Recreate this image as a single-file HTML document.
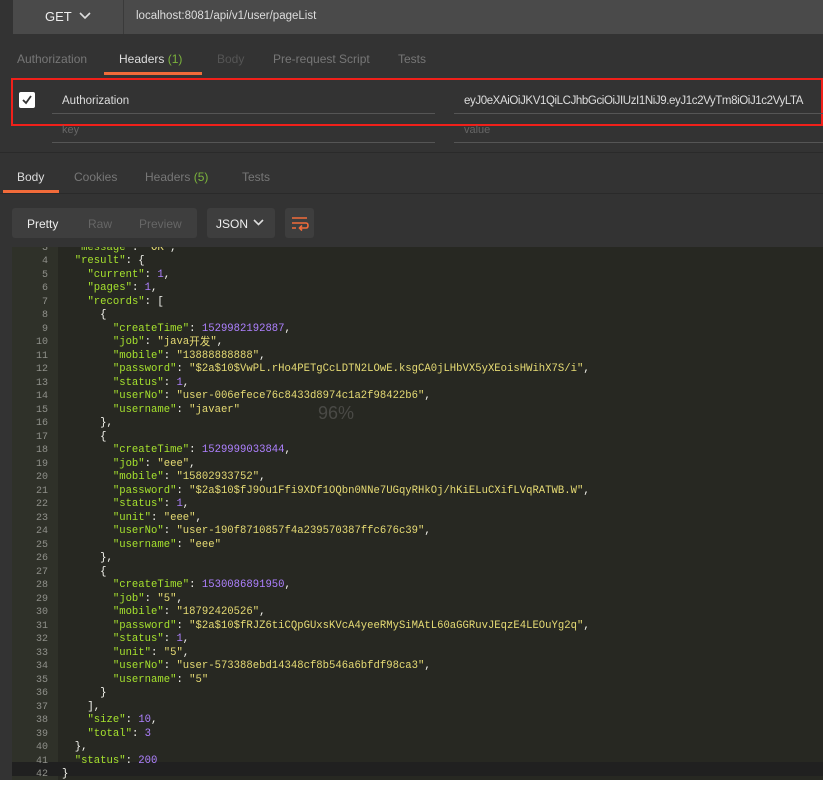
<!DOCTYPE html>
<html><head><meta charset="utf-8"><style>
*{margin:0;padding:0;box-sizing:border-box}
body{width:823px;height:788px;background:#fff;position:relative;overflow:hidden;font-family:"Liberation Sans","Noto Sans CJK SC",sans-serif}
.a{position:absolute}
#top{left:0;top:0;width:823px;height:780px;background:#333}
.tab{font-size:12px;color:#777}
#code{left:12px;top:247px;width:811px;height:533px;background:#272822;overflow:hidden}
#gut{left:0;top:0;width:46px;height:533px;background:#2f3129}
.ln{position:absolute;left:0;width:36px;text-align:right;font:10px/13.5px "Liberation Mono",monospace;color:#8f908a;height:13.5px}
.cl{position:absolute;left:50px;font:10.6px/13.5px "Liberation Mono","Noto Sans CJK SC",monospace;color:#f8f8f2;white-space:pre;height:13.5px}
.k{color:#a6e22e}.s{color:#e6db74}.n{color:#ae81ff}
.cj{display:inline-block;line-height:12px;height:12px;vertical-align:-1px}
</style></head><body>
<div id="top" class="a"></div>
<div class="a" style="left:13px;top:0;width:810px;height:34px;background:#4a4a4a"></div>
<div class="a" style="left:123px;top:0;width:1px;height:34px;background:#3a3a3a"></div>
<div class="a" style="left:45px;top:9px;font-size:13px;color:#eee">GET</div>
<svg class="a" style="left:79px;top:11px" width="12" height="10"><path d="M1 2 L6 7 L11 2" stroke="#ddd" stroke-width="1.6" fill="none"/></svg>
<div class="a" style="left:136px;top:10px;font-size:11.5px;color:#ddd">localhost:8081/api/v1/user/pageList</div>
<div class="a tab" style="left:17px;top:52px">Authorization</div>
<div class="a tab" style="left:119px;top:52px;color:#ddd">Headers <span style="color:#7bb33c">(1)</span></div>
<div class="a" style="left:104px;top:72px;width:98px;height:3px;background:#f26b3a"></div>
<div class="a tab" style="left:217px;top:52px;color:#555">Body</div>
<div class="a tab" style="left:273px;top:52px">Pre-request Script</div>
<div class="a tab" style="left:398px;top:52px">Tests</div>
<div class="a" style="left:11px;top:78px;width:812px;height:48px;border:2px solid #f0201a"></div>
<div class="a" style="left:19px;top:92px;width:16px;height:16px;background:#fff;border-radius:2px"></div>
<svg class="a" style="left:21px;top:94px" width="12" height="12"><path d="M2 6 L5 9 L10 2" stroke="#333" stroke-width="1.8" fill="none"/></svg>
<div class="a" style="left:62px;top:95px;font-size:11.5px;color:#ddd">Authorization</div>
<div class="a" style="left:52px;top:113px;width:383px;height:1px;background:#555"></div>
<div class="a" style="left:464px;top:95px;font-size:11.5px;color:#ddd;white-space:nowrap;width:344px;overflow:hidden;letter-spacing:-0.4px">eyJ0eXAiOiJKV1QiLCJhbGciOiJIUzI1NiJ9.eyJ1c2VyTm8iOiJ1c2VyLTA</div>
<div class="a" style="left:454px;top:113px;width:369px;height:1px;background:#555"></div>
<div class="a" style="left:62px;top:124px;font-size:11px;color:#666">key</div>
<div class="a" style="left:464px;top:124px;font-size:11px;color:#666">value</div>
<div class="a" style="left:52px;top:142px;width:383px;height:1px;background:#555"></div>
<div class="a" style="left:454px;top:142px;width:369px;height:1px;background:#555"></div>
<div class="a" style="left:0;top:152px;width:823px;height:1px;background:#2a2a2a"></div>
<div class="a tab" style="left:17px;top:170px;color:#ddd">Body</div>
<div class="a tab" style="left:74px;top:170px">Cookies</div>
<div class="a tab" style="left:145px;top:170px">Headers <span style="color:#7bb33c">(5)</span></div>
<div class="a tab" style="left:242px;top:170px">Tests</div>
<div class="a" style="left:3px;top:190px;width:56px;height:3px;background:#f26b3a"></div>
<div class="a" style="left:0;top:193px;width:823px;height:1px;background:#2a2a2a"></div>
<div class="a" style="left:12px;top:208px;width:185px;height:30px;background:#3e3e3e;border-radius:3px"></div>
<div class="a" style="left:27px;top:217px;font-size:12px;color:#eee">Pretty</div>
<div class="a" style="left:88px;top:217px;font-size:12px;color:#666">Raw</div>
<div class="a" style="left:139px;top:217px;font-size:12px;color:#666">Preview</div>
<div class="a" style="left:207px;top:208px;width:68px;height:30px;background:#3e3e3e;border-radius:3px"></div>
<div class="a" style="left:216px;top:217px;font-size:12px;color:#eee">JSON</div>
<svg class="a" style="left:253px;top:218px" width="11" height="9"><path d="M1 2 L5.5 6.5 L10 2" stroke="#ddd" stroke-width="1.6" fill="none"/></svg>
<div class="a" style="left:285px;top:208px;width:29px;height:30px;background:#3e3e3e;border-radius:3px"></div>
<svg class="a" style="left:289px;top:213px" width="21" height="20"><path d="M3 5 H18 M3 10 H17 Q19 10 19 12.5 Q19 15 17 15 H11 M13 12.5 L10.5 15 L13 17.5 M3 15 H7" stroke="#f26b3a" stroke-width="1.6" fill="none"/></svg>
<div id="code" class="a">
<div id="gut" class="a"></div>
<div class="a" style="left:0;top:515px;width:811px;height:14px;background:#202020"></div>
<div class="a" style="left:306px;top:156px;font-size:18px;color:#4a4a46">96%</div>
<div id="lines"></div>
</div>
<script>
var L=[
['3','  <k>"message"</k>: <s>"OK"</s>,'],
['4','  <k>"result"</k>: {'],
['5','    <k>"current"</k>: <n>1</n>,'],
['6','    <k>"pages"</k>: <n>1</n>,'],
['7','    <k>"records"</k>: ['],
['8','      {'],
['9','        <k>"createTime"</k>: <n>1529982192887</n>,'],
['10','        <k>"job"</k>: <s>"java<span class="cj">开发</span>"</s>,'],
['11','        <k>"mobile"</k>: <s>"13888888888"</s>,'],
['12','        <k>"password"</k>: <s>"$2a$10$VwPL.rHo4PETgCcLDTN2LOwE.ksgCA0jLHbVX5yXEoisHWihX7S/i"</s>,'],
['13','        <k>"status"</k>: <n>1</n>,'],
['14','        <k>"userNo"</k>: <s>"user-006efece76c8433d8974c1a2f98422b6"</s>,'],
['15','        <k>"username"</k>: <s>"javaer"</s>'],
['16','      },'],
['17','      {'],
['18','        <k>"createTime"</k>: <n>1529999033844</n>,'],
['19','        <k>"job"</k>: <s>"eee"</s>,'],
['20','        <k>"mobile"</k>: <s>"15802933752"</s>,'],
['21','        <k>"password"</k>: <s>"$2a$10$fJ9Ou1Ffi9XDf1OQbn0NNe7UGqyRHkOj/hKiELuCXifLVqRATWB.W"</s>,'],
['22','        <k>"status"</k>: <n>1</n>,'],
['23','        <k>"unit"</k>: <s>"eee"</s>,'],
['24','        <k>"userNo"</k>: <s>"user-190f8710857f4a239570387ffc676c39"</s>,'],
['25','        <k>"username"</k>: <s>"eee"</s>'],
['26','      },'],
['27','      {'],
['28','        <k>"createTime"</k>: <n>1530086891950</n>,'],
['29','        <k>"job"</k>: <s>"5"</s>,'],
['30','        <k>"mobile"</k>: <s>"18792420526"</s>,'],
['31','        <k>"password"</k>: <s>"$2a$10$fRJZ6tiCQpGUxsKVcA4yeeRMySiMAtL60aGGRuvJEqzE4LEOuYg2q"</s>,'],
['32','        <k>"status"</k>: <n>1</n>,'],
['33','        <k>"unit"</k>: <s>"5"</s>,'],
['34','        <k>"userNo"</k>: <s>"user-573388ebd14348cf8b546a6bfdf98ca3"</s>,'],
['35','        <k>"username"</k>: <s>"5"</s>'],
['36','      }'],
['37','    ],'],
['38','    <k>"size"</k>: <n>10</n>,'],
['39','    <k>"total"</k>: <n>3</n>'],
['40','  },'],
['41','  <k>"status"</k>: <n>200</n>'],
['42','}']];
var h='';
for(var i=0;i<L.length;i++){var t=-5.5+i*13.5;
var c=L[i][1].replace(/<k>/g,'<span class="k">').replace(/<s>/g,'<span class="s">').replace(/<n>/g,'<span class="n">').replace(/<\/[ksn]>/g,'</span>');
h+='<div class="ln" style="top:'+t+'px">'+L[i][0]+'</div><div class="cl" style="top:'+t+'px">'+c+'</div>';}
document.getElementById('lines').innerHTML=h;
</script>
</body></html>
